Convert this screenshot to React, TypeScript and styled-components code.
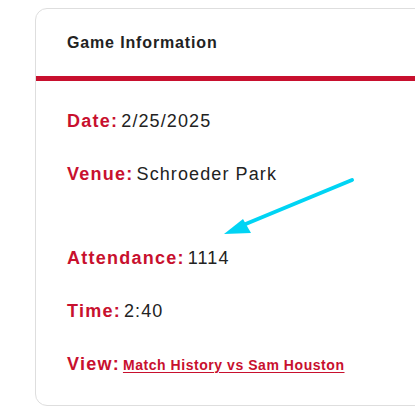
import styled, { createGlobalStyle } from "styled-components";

const GlobalStyle = createGlobalStyle`
  body {
    margin: 0;
    background: #ffffff;
    font-family: "Liberation Sans", Arial, sans-serif;
    overflow: hidden;
  }
`;

const Page = styled.div`
  position: relative;
  width: 415px;
  height: 407px;
  padding: 8px 0 0 35px;
  box-sizing: border-box;
  overflow: hidden;
`;

const Card = styled.section`
  width: 420px;
  height: 398px;
  box-sizing: border-box;
  border: 1px solid #dedede;
  border-radius: 12px;
  background: #fff;
  display: flex;
  flex-direction: column;
`;

const Header = styled.header`
  height: 67px;
  padding-left: 31px;
  display: flex;
  align-items: center;
  border-bottom: 5px solid #c8102e;
  font-size: 16px;
  font-weight: 700;
  color: #222;
  letter-spacing: 0.85px;
`;

const Body = styled.div`
  padding: 29px 0 0 31px;
  display: flex;
  flex-direction: column;
  gap: 31px;
`;

const Row = styled.div`
  font-size: 18px;
  line-height: 22px;
  color: #222;
  white-space: nowrap;
  letter-spacing: 1.1px;
`;

const Spacer = styled.div`
  height: 0;
`;

const Label = styled.span`
  color: #c8102e;
  font-weight: 700;
  margin-right: 3px;
  letter-spacing: 1.25px;
`;

const Link = styled.a`
  color: #c8102e;
  font-size: 14px;
  font-weight: 700;
  letter-spacing: 0.55px;
  text-decoration: underline;
  text-underline-offset: 2px;
`;

const Arrow = styled.svg`
  position: absolute;
  left: 0;
  top: 0;
  pointer-events: none;
`;

const rows: [string, string][] = [
  ["Date:", "2/25/2025"],
  ["Venue:", "Schroeder Park"],
];

const rows2: [string, string][] = [
  ["Attendance:", "1114"],
  ["Time:", "2:40"],
];

export default function App() {
  return (
    <>
      <GlobalStyle />
      <Page>
        <Card>
          <Header>Game Information</Header>
          <Body>
            {rows.map(([k, v]) => (
              <Row key={k}>
                <Label>{k}</Label>
                {v}
              </Row>
            ))}
            <Spacer />
            {rows2.map(([k, v]) => (
              <Row key={k}>
                <Label>{k}</Label>
                {v}
              </Row>
            ))}
            <Row>
              <Label>View:</Label>
              <Link href="#">Match History vs Sam Houston</Link>
            </Row>
          </Body>
        </Card>
        <Arrow width="415" height="407" viewBox="0 0 415 407">
          <line
            x1="352"
            y1="180"
            x2="236"
            y2="228"
            stroke="#00d4f4"
            strokeWidth="4"
            strokeLinecap="round"
          />
          <polygon points="224,234 243,219 251,233" fill="#00d4f4" />
        </Arrow>
      </Page>
    </>
  );
}
